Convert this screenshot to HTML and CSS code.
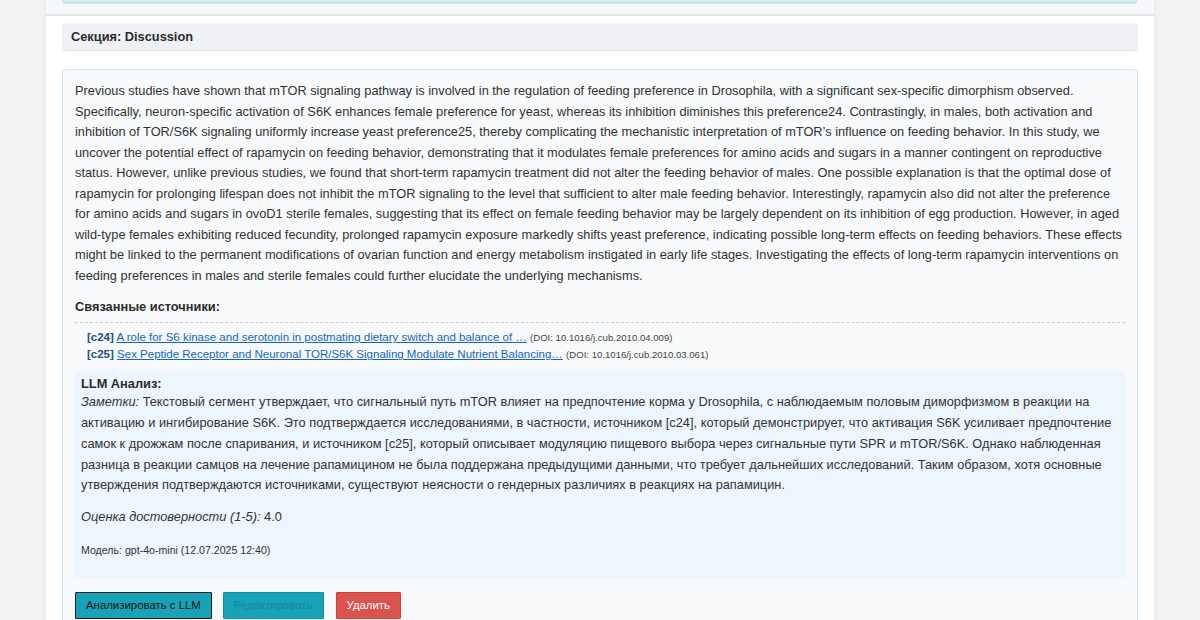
FILE: index.html
```html
<!DOCTYPE html>
<html lang="ru">
<head>
<meta charset="utf-8">
<title>Discussion</title>
<link rel="stylesheet" href="styles.css">
</head>
<body>
<div class="page">
  <div class="prev">
    <div class="prev-box"></div>
  </div>
  <div class="section">
    <div class="section-head">Секция: Discussion</div>
    <div class="seg">
      <p class="seg-text">Previous studies have shown that mTOR signaling pathway is involved in the regulation of feeding preference in Drosophila, with a significant sex-specific dimorphism observed. Specifically, neuron-specific activation of S6K enhances female preference for yeast, whereas its inhibition diminishes this preference24. Contrastingly, in males, both activation and inhibition of TOR/S6K signaling uniformly increase yeast preference25, thereby complicating the mechanistic interpretation of mTOR’s influence on feeding behavior. In this study, we uncover the potential effect of rapamycin on feeding behavior, demonstrating that it modulates female preferences for amino acids and sugars in a manner contingent on reproductive status. However, unlike previous studies, we found that short-term rapamycin treatment did not alter the feeding behavior of males. One possible explanation is that the optimal dose of rapamycin for prolonging lifespan does not inhibit the mTOR signaling to the level that sufficient to alter male feeding behavior. Interestingly, rapamycin also did not alter the preference for amino acids and sugars in ovoD1 sterile females, suggesting that its effect on female feeding behavior may be largely dependent on its inhibition of egg production. However, in aged wild-type females exhibiting reduced fecundity, prolonged rapamycin exposure markedly shifts yeast preference, indicating possible long-term effects on feeding behaviors. These effects might be linked to the permanent modifications of ovarian function and energy metabolism instigated in early life stages. Investigating the effects of long-term rapamycin interventions on feeding preferences in males and sterile females could further elucidate the underlying mechanisms.</p>
      <h4 class="src-title">Связанные источники:</h4>
      <ul class="src-list">
        <li><b class="cite">[c24]</b> <a href="#" class="src-link">A role for S6 kinase and serotonin in postmating dietary switch and balance of …</a> <span class="doi">(DOI: 10.1016/j.cub.2010.04.009)</span></li>
        <li><b class="cite">[c25]</b> <a href="#" class="src-link">Sex Peptide Receptor and Neuronal TOR/S6K Signaling Modulate Nutrient Balancing…</a> <span class="doi">(DOI: 10.1016/j.cub.2010.03.061)</span></li>
      </ul>
      <div class="llm">
        <div class="llm-title">LLM Анализ:</div>
        <p class="llm-notes"><i>Заметки:</i> Текстовый сегмент утверждает, что сигнальный путь mTOR влияет на предпочтение корма у Drosophila, с наблюдаемым половым диморфизмом в реакции на активацию и ингибирование S6K. Это подтверждается исследованиями, в частности, источником [c24], который демонстрирует, что активация S6K усиливает предпочтение самок к дрожжам после спаривания, и источником [c25], который описывает модуляцию пищевого выбора через сигнальные пути SPR и mTOR/S6K. Однако наблюденная разница в реакции самцов на лечение рапамицином не была поддержана предыдущими данными, что требует дальнейших исследований. Таким образом, хотя основные утверждения подтверждаются источниками, существуют неясности о гендерных различиях в реакциях на рапамицин.</p>
        <p class="llm-score"><i>Оценка достоверности (1-5):</i> 4.0</p>
        <p class="llm-model">Модель: gpt-4o-mini (12.07.2025 12:40)</p>
      </div>
      <div class="actions">
        <button class="btn btn-info btn-focus">Анализировать с LLM</button>
        <button class="btn btn-info btn-dim">Редактировать</button>
        <button class="btn btn-danger">Удалить</button>
      </div>
    </div>
  </div>
</div>
</body>
</html>
```
FILE: styles.css
```css
html, body {
  margin: 0;
  padding: 0;
}
body {
  background: #f2f2f2;
  font-family: "Liberation Sans", Arial, sans-serif;
  color: #333;
  height: 620px;
  overflow: hidden;
}
.page {
  margin: 0 46px;
  background: #fff;
  box-shadow: 0 0 4px rgba(0,0,0,0.08);
  min-height: 620px;
}
.prev {
  background: #f7f8fa;
  border-bottom: 2px solid #e4e6e9;
  padding: 0 17px 11px 16px;
}
.prev-box {
  height: 2px;
  background: #d4eef2;
  border: 1px solid #bfdde2;
  border-top: none;
  border-radius: 0 0 3px 3px;
  box-shadow: 0 1px 1px rgba(0,0,0,0.08);
}
.section {
  padding: 7px 16px 0 16px;
}
.section-head {
  background: #f0f1f4;
  border-bottom: 1px solid #e1e3e7;
  border-radius: 3px;
  height: 27px;
  line-height: 27px;
  padding-left: 9px;
  font-size: 12.8px;
  font-weight: bold;
  color: #2b2b2b;
}
.seg {
  margin-top: 18px;
  background: #f7f9fb;
  border: 1px solid #cde3f6;
  border-radius: 4px;
  padding: 11px 12px 0 12px;
  height: 560px;
}
.seg-text {
  margin: 0;
  font-size: 12.8px;
  line-height: 20.55px;
  color: #333;
}
.src-title {
  margin: 11px 0 0 0;
  font-size: 12.8px;
  line-height: 20px;
  font-weight: bold;
  color: #2b2b2b;
}
.src-list {
  list-style: none;
  margin: 5px 0 0 0;
  padding: 6px 0 0 12px;
  border-top: 1px dashed #cfcfcf;
  font-size: 11.5px;
  line-height: 16px;
}
.cite {
  color: #1e4f86;
}
.src-link {
  color: #1565c0;
  text-decoration: underline;
}
.doi {
  font-size: 9.6px;
  color: #444;
}
.llm {
  margin-top: 8px;
  background: #edf5fd;
  border-radius: 3px;
  padding: 5px 6px 18px 6px;
}
.llm-title {
  font-size: 12.8px;
  font-weight: bold;
  line-height: 16px;
  color: #2b2b2b;
}
.llm-notes {
  margin: 0;
  font-size: 12.8px;
  line-height: 20.7px;
  color: #333;
}
.llm-score {
  margin: 11px 0 0 0;
  font-size: 12.8px;
  line-height: 20px;
  color: #333;
}
.llm-model {
  margin: 13px 0 0 0;
  font-size: 10.6px;
  line-height: 20px;
  color: #333;
}
.actions {
  display: flex;
  gap: 11px;
  margin-top: 14px;
}
.btn {
  font-family: "Liberation Sans", Arial, sans-serif;
  font-size: 11.4px;
  height: 27px;
  padding: 0 10px;
  border-radius: 1px;
  cursor: pointer;
}
.btn-info {
  background: #17a2b8;
  border: 1px solid #148ea1;
  color: #fff;
}
.btn-focus {
  border-color: #1a1a1a;
  color: #111;
}
.btn-dim {
  color: #1d8797;
}
.btn-danger {
  background: #d9534f;
  border: 1px solid #d43f3a;
  color: #fff;
  margin-left: 1px;
}
```
